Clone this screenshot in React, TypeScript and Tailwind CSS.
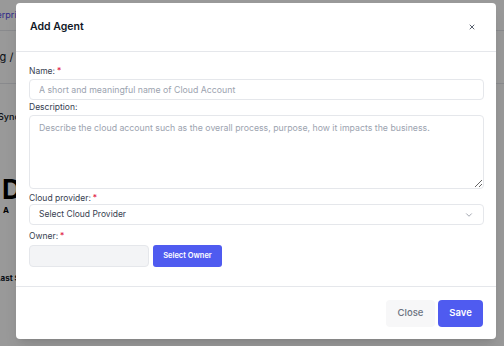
import { X, ChevronDown } from 'lucide-react'

function Label({ text, required, className = '' }: { text: string; required?: boolean; className?: string }) {
  return (
    <div className={`h-[12px] text-[8.5px] leading-[12px] text-[#374151] ${className}`}>
      {text}
      {required && <span className="ml-[2px] text-[#e11d48]">*</span>}
    </div>
  )
}

function BackgroundPage() {
  return (
    <div className="h-full w-full bg-white font-['Inter',sans-serif]">
      <div className="flex h-[31px] items-center border-b border-[#e5e7eb]">
        <span className="ml-[-17px] text-[9px] text-[#4f46e5]">Enterprise</span>
      </div>
      <div className="flex h-[53px] items-center border-b border-[#e5e7eb]">
        <span className="ml-[-30px] text-[11px] text-[#111827]">Setting /</span>
      </div>
      <div className="mt-[26px] ml-[-2px] text-[9px] font-medium text-[#111827]">Sync</div>
      <div className="mt-[52px] ml-[2px] text-[27px] font-bold leading-[28px] text-black">D</div>
      <div className="ml-[3px] text-[8px] font-bold text-black">A</div>
      <div className="mt-[56px] ml-[-4px] text-[8px] font-bold text-[#111827]">Last Sync</div>
    </div>
  )
}

export default function App() {
  return (
    <div className="relative h-[346px] w-[504px] overflow-hidden font-['Inter',sans-serif]">
      <BackgroundPage />
      <div className="absolute inset-0 bg-black/40" />

      <div className="absolute left-[16px] top-[3px] flex h-[336px] w-[480px] flex-col rounded-[4px] bg-white shadow-lg">
        <div className="flex h-[49px] shrink-0 items-center justify-between border-b border-[#e5e7eb] pl-[14px] pr-[20px]">
          <h2 className="text-[10.5px] font-semibold text-[#111827]">Add Agent</h2>
          <X className="h-[8px] w-[8px] text-[#374151]" strokeWidth={2.5} />
        </div>

        <div className="border-b border-[#e5e7eb] pl-[13px] pr-[12px] pt-[13px] pb-[19px]">
          <Label text="Name:" required className="mb-[2px]" />
          <input
            className="block h-[21px] w-full rounded-[4px] border border-[#e5e7eb] px-[9px] text-[8.75px] placeholder:text-[#9ca3af] outline-none"
            placeholder="A short and meaningful name of Cloud Account"
          />

          <Label text="Description:" className="mt-[1px] mb-[2px]" />
          <textarea
            className="block h-[74px] w-full resize-y rounded-[4px] border border-[#e5e7eb] px-[9px] py-[6px] text-[8.75px] leading-[12px] placeholder:text-[#9ca3af] outline-none"
            placeholder="Describe the cloud account such as the overall process, purpose, how it impacts the business."
          />

          <Label text="Cloud provider:" required className="mt-[3px]" />
          <div className="flex h-[21px] items-center justify-between rounded-[4px] border border-[#e5e7eb] pl-[9px] pr-[9px]">
            <span className="text-[8.5px] text-[#374151]">Select Cloud Provider</span>
            <ChevronDown className="h-[10px] w-[10px] text-[#6b7280]" strokeWidth={1.5} />
          </div>

          <Label text="Owner:" required className="mt-[5px] mb-[3px]" />
          <div className="flex gap-[4px]">
            <div className="h-[22px] w-[120px] rounded-[4px] border border-[#e5e7eb] bg-[#f3f4f6]" />
            <button className="h-[22px] w-[69px] rounded-[3px] bg-[#4f5bf0] text-[7.5px] font-semibold text-white">
              Select Owner
            </button>
          </div>
        </div>

        <div className="flex flex-1 items-center justify-end gap-[3px] pr-[13px]">
          <button className="h-[27px] w-[49px] rounded-[4px] bg-[#f7f7f8] text-[9.5px] font-medium text-[#6b7280]">
            Close
          </button>
          <button className="h-[27px] w-[45px] rounded-[4px] bg-[#4f5bf0] text-[9.5px] font-semibold text-white">
            Save
          </button>
        </div>
      </div>
    </div>
  )
}
